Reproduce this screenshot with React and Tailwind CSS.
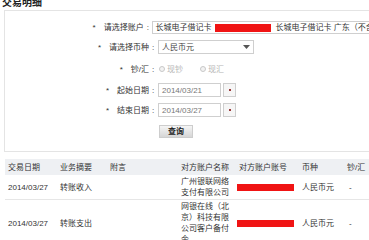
import React from "react";

const font = { fontFamily: '"Liberation Sans","Noto Sans CJK SC",sans-serif' };

function Label({ text }) {
  return (
    <>
      <div className="w-[144px] text-right whitespace-nowrap text-[#333]">
        <span className="mr-[8px]">*</span>
        {text}
      </div>
      <span className="w-[9px] pl-[3px] text-[#333]">:</span>
    </>
  );
}

function DateField({ value }) {
  return (
    <div className="flex items-center gap-[2px]">
      <div className="w-[63px] h-[14px] border border-[#cfcfcf] flex items-center pl-[3px] text-[#777]">{value}</div>
      <div className="w-[13px] h-[14px] border border-[#cfcfcf] bg-[#f6f6f6] flex items-center justify-center">
        <div className="w-[2px] h-[2px] bg-[#9b3a3a]" />
      </div>
    </div>
  );
}

const rows = [
  { date: "2014/03/27", type: "转账收入", name: "广州银联网络支付有限公司" },
  { date: "2014/03/27", type: "转账支出", name: "网银在线（北京）科技有限公司客户备付金" },
];

export default function App() {
  return (
    <div className="w-[369px] h-[240px] bg-white overflow-hidden text-[8px] leading-[11px]" style={font}>
      <div className="h-[10px] leading-[6px] pl-[2px] text-[10px] font-bold text-[#222]">交易明细</div>

      <div className="ml-[4px] w-[400px] h-[142px] border border-[#e4e4e4]">
        <div className="mt-[10px] flex items-center h-[13px]">
          <Label text="请选择账户" />
          <div className="w-[260px] h-[13px] border border-[#cfcfcf] flex items-center pl-[2px] whitespace-nowrap text-[#333]">
            长城电子借记卡
            <span className="inline-block w-[56px] h-[8px] bg-[#f01414] mx-[4px]" />
            长城电子借记卡 广东（不含深圳）
          </div>
        </div>

        <div className="mt-[6px] flex items-center h-[14px]">
          <Label text="请选择币种" />
          <div className="w-[96px] h-[14px] border border-[#cfcfcf] flex items-center justify-between pl-[3px] pr-[3px] text-[#444]">
            人民币元
            <svg width="7" height="4" viewBox="0 0 7 4"><path d="M0 0h7L3.5 4z" fill="#555" /></svg>
          </div>
        </div>

        <div className="mt-[9px] flex items-center h-[12px]">
          <Label text="钞/汇" />
          <div className="flex items-center text-[#b5b5b5]">
            <span className="w-[6px] h-[6px] rounded-full border border-[#c8c8c8] bg-[#f3f3f3] ml-[1px] mr-[1px]" />
            <span className="ml-[1px]">现钞</span>
            <span className="w-[6px] h-[6px] rounded-full border border-[#c8c8c8] bg-[#f3f3f3] ml-[17px] mr-[1px]" />
            <span className="ml-[1px]">现汇</span>
          </div>
        </div>

        <div className="mt-[8px] flex items-center h-[14px]">
          <Label text="起始日期" />
          <DateField value="2014/03/21" />
        </div>

        <div className="mt-[6px] flex items-center h-[14px]">
          <Label text="结束日期" />
          <DateField value="2014/03/27" />
        </div>

        <div className="mt-[8px] flex h-[13px]">
          <div className="w-[154px]" />
          <button className="w-[34px] h-[13px] border border-[#cdcdcd] bg-gradient-to-b from-[#f5f5f5] to-[#d6d6d6] text-[#222] font-bold text-[8px] leading-[11px]">
            查询
          </button>
        </div>
      </div>

      <table className="mt-[7px] ml-[5px] w-[400px] table-fixed border-collapse text-[#333]">
        <colgroup>
          <col className="w-[52px]" />
          <col className="w-[50px]" />
          <col className="w-[71px]" />
          <col className="w-[58px]" />
          <col className="w-[63px]" />
          <col className="w-[45px]" />
          <col className="w-[61px]" />
        </colgroup>
        <thead>
          <tr className="bg-[#eef0f3] h-[16px] text-left">
            {["交易日期", "业务摘要", "附言", "对方账户名称", "对方账户账号", "币种", "钞/汇"].map((h) => (
              <th key={h} className="font-normal pl-[3px] whitespace-nowrap overflow-hidden">{h}</th>
            ))}
          </tr>
        </thead>
        <tbody>
          {rows.map((r, i) => (
            <tr key={i} className={i > 0 ? "border-t border-[#e6e6e6]" : ""}>
              <td className="pl-[3px] py-[1px] align-middle whitespace-nowrap">{r.date}</td>
              <td className="pl-[3px] align-middle">{r.type}</td>
              <td className="pl-[3px]" />
              <td className="pl-[3px] pr-[3px] py-[1px] align-middle break-all">{r.name}</td>
              <td className="pl-[1px] align-middle">
                <div className="w-[57px] h-[7px] bg-[#f01414]" />
              </td>
              <td className="pl-[3px] align-middle whitespace-nowrap">人民币元</td>
              <td className="pl-[5px] align-middle">-</td>
            </tr>
          ))}
        </tbody>
      </table>
    </div>
  );
}
